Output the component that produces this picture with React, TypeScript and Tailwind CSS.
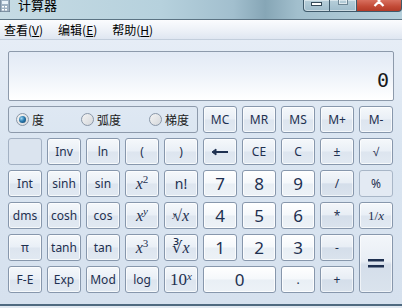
import React from 'react';

// Windows 7 style calculator, scientific mode

type Kind = 'fn' | 'num' | 'op' | 'flat' | 'empty';

const kindClass: Record<Kind, string> = {
    fn: 'border-[#8797ac] bg-[linear-gradient(180deg,#f5f8fb_0%,#e9eff6_48%,#dde5ef_52%,#e1e9f2_100%)] shadow-[inset_0_0_0_1px_rgba(255,255,255,0.7)]',
    num: 'border-[#8797ac] bg-[linear-gradient(180deg,#ffffff_0%,#f5f8fb_48%,#e9eff5_52%,#edf2f7_100%)] shadow-[inset_0_0_0_1px_rgba(255,255,255,0.8)]',
    op: 'border-[#8797ac] bg-[linear-gradient(180deg,#f3f6fa_0%,#e8eef5_46%,#d4deea_52%,#dae3ed_100%)] shadow-[inset_0_0_0_1px_rgba(255,255,255,0.6)]',
    flat: 'border-[#a8b6c7] bg-[#e3eaf3]',
    empty: 'border-[#a3b1c3] bg-[#dbe4ef]',
};

const Btn = ({
    kind = 'fn',
    className = '',
    children,
}: {
    kind?: Kind;
    className?: string;
    children?: React.ReactNode;
}) => (
    <div
        className={`flex items-center justify-center rounded-[3px] border text-[#1e3050] text-[12px] leading-none font-['Noto_Sans',sans-serif] ${kindClass[kind]} ${className}`}
    >
        {children}
    </div>
);

const I = ({ children }: { children: React.ReactNode }) => (
    <span className="italic">{children}</span>
);

const Math = ({ children }: { children: React.ReactNode }) => (
    <span className="font-['Liberation_Serif',serif] text-[16px] text-[#1e3050]">{children}</span>
);

const Radio = ({ checked, label, className = '' }: { checked?: boolean; label: string; className?: string }) => (
    <div className={`flex items-center gap-[3px] ${className}`}>
        <div className="flex h-[13px] w-[13px] items-center justify-center rounded-full border border-[#8a97a8] bg-[linear-gradient(135deg,#f4f4f4,#d4d7db)]">
            {checked && (
                <div className="h-[7px] w-[7px] rounded-full bg-[radial-gradient(circle_at_35%_35%,#9fd6f2_0%,#2a7bb0_45%,#0d3a5e_100%)]" />
            )}
        </div>
        <span className="text-[12px] text-[#1b1b1b] font-['Noto_Sans_CJK_SC',sans-serif]">{label}</span>
    </div>
);

const MenuItem = ({ label, hot }: { label: string; hot: string }) => (
    <span className="text-[12px] text-black font-['Noto_Sans_CJK_SC',sans-serif]">
        {label}(<span className="underline">{hot}</span>)
    </span>
);

export default function App() {
    return (
        <div className="flex h-[308px] w-[402px] flex-col overflow-hidden bg-[#d9e4f1]">
            {/* Title bar (cut off at the top) */}
            <div className="flex h-[20px] shrink-0 items-start justify-between border-b border-[#5b7383] bg-[linear-gradient(90deg,#c6dbe4_0%,#b6d1dd_40%,#a2bfce_58%,#86a6b6_66%,#a2bfcd_74%,#b6d0dc_100%)]">
                <div className="flex items-start gap-[8px]">
                    <svg width="10" height="13" viewBox="0 0 10 13" className="mt-[-1px]">
                        <rect x="0" y="0" width="10" height="13" rx="1" fill="#9fb1c2" stroke="#5d7185" strokeWidth="1" />
                        <rect x="2" y="2" width="6" height="3" fill="#e8f1f8" />
                        <rect x="2" y="7" width="2" height="1.5" fill="#ffffff" />
                        <rect x="5" y="7" width="2" height="1.5" fill="#ffffff" />
                        <rect x="2" y="10" width="2" height="1.5" fill="#ffffff" />
                        <rect x="5" y="10" width="2" height="1.5" fill="#ffffff" />
                    </svg>
                    <span className="mt-[-2px] text-[13px] leading-none text-black font-['Noto_Sans_CJK_SC',sans-serif]">
                        计算器
                    </span>
                </div>
                <div className="flex h-[12px]">
                    <div className="flex w-[54px] rounded-bl-[4px] border border-t-0 border-[#3f5a6b] bg-[linear-gradient(180deg,#b7cfda_0%,#9fbccb_100%)] shadow-[inset_0_0_0_1px_rgba(255,255,255,0.45)]">
                        <div className="flex w-[27px] items-start justify-center border-r border-[#3f5a6b]">
                            <div className="mt-[2px] h-[4px] w-[11px] border border-[#354a58] bg-white" />
                        </div>
                        <div className="flex w-[27px] items-start justify-center">
                            <div className="mt-[-2px] h-[7px] w-[10px] border border-[#6f8795] bg-transparent shadow-[inset_0_0_0_1px_rgba(255,255,255,0.6)]" />
                        </div>
                    </div>
                    <div className="flex w-[45px] items-start justify-center rounded-br-[4px] border border-t-0 border-l-0 border-[#3f5a6b] bg-[linear-gradient(180deg,#d86f5e_0%,#c24a36_60%,#b33b28_100%)]">
                        <svg width="12" height="7" viewBox="0 0 12 7">
                            <path d="M2 -4 L6 0.5 L10 -4 M1.5 6 L6 1.5 L10.5 6" stroke="#ffffff" strokeWidth="2.2" fill="none" />
                        </svg>
                    </div>
                </div>
            </div>

            {/* Menu bar */}
            <div className="flex h-[20px] shrink-0 items-center gap-[15px] border-b border-[#c3cedc] bg-[linear-gradient(180deg,#fbfcfe_0%,#eef2f8_50%,#dfe6f1_100%)] px-[4px]">
                <MenuItem label="查看" hot="V" />
                <MenuItem label="编辑" hot="E" />
                <MenuItem label="帮助" hot="H" />
            </div>

            {/* Body */}
            <div className="flex flex-1 flex-col bg-[linear-gradient(180deg,#e6edf6_0%,#dae5f1_40%,#d6e1ee_100%)] px-[8px] pt-[11px]">
                <div className="flex h-[50px] items-end justify-end rounded-[2px] border border-[#8d9aab] bg-[linear-gradient(180deg,#e2eaf5_0%,#edf2f9_45%,#ffffff_100%)] pb-[10px] pr-[4px]">
                    <span className="text-[20px] leading-none text-[#1a1a1a] font-['DejaVu_Sans_Mono',monospace]">0</span>
                </div>

                <div className="mt-[5px] grid grid-cols-[repeat(10,34px)] grid-rows-[repeat(6,27px)] gap-[5px]">
                    {/* Row 0 */}
                    <div className="col-span-5 flex items-center rounded-[3px] border border-[#8d9aab] pl-[7px]">
                        <Radio checked label="度" />
                        <Radio label="弧度" className="ml-[37px]" />
                        <Radio label="梯度" className="ml-[28px]" />
                    </div>
                    <Btn>MC</Btn>
                    <Btn>MR</Btn>
                    <Btn>MS</Btn>
                    <Btn>M+</Btn>
                    <Btn>M-</Btn>

                    {/* Row 1 */}
                    <Btn kind="empty" />
                    <Btn>Inv</Btn>
                    <Btn>ln</Btn>
                    <Btn>(</Btn>
                    <Btn>)</Btn>
                    <Btn>
                        <svg width="18" height="8" viewBox="0 0 18 8">
                            <path d="M5 1 L1 4 L5 7 Z" fill="#1e3050" stroke="#1e3050" strokeWidth="1" />
                            <rect x="4" y="3" width="13" height="2" fill="#1e3050" />
                        </svg>
                    </Btn>
                    <Btn>CE</Btn>
                    <Btn>C</Btn>
                    <Btn className="text-[11px]">±</Btn>
                    <Btn className="text-[11px]">√</Btn>

                    {/* Row 2 */}
                    <Btn>Int</Btn>
                    <Btn>sinh</Btn>
                    <Btn>sin</Btn>
                    <Btn>
                        <Math>
                            <I>x</I>
                            <sup className="text-[11px]">2</sup>
                        </Math>
                    </Btn>
                    <Btn className="text-[14px]">n!</Btn>
                    <Btn kind="num" className="text-[17px]">7</Btn>
                    <Btn kind="num" className="text-[17px]">8</Btn>
                    <Btn kind="num" className="text-[17px]">9</Btn>
                    <Btn kind="op">/</Btn>
                    <Btn kind="flat">%</Btn>

                    {/* Row 3 */}
                    <Btn>dms</Btn>
                    <Btn>cosh</Btn>
                    <Btn>cos</Btn>
                    <Btn>
                        <Math>
                            <I>x</I>
                            <sup className="text-[11px] italic">y</sup>
                        </Math>
                    </Btn>
                    <Btn>
                        <Math>
                            <sup className="mr-[-3px] text-[8px] italic">y</sup>√<I>x</I>
                        </Math>
                    </Btn>
                    <Btn kind="num" className="text-[17px]">4</Btn>
                    <Btn kind="num" className="text-[17px]">5</Btn>
                    <Btn kind="num" className="text-[17px]">6</Btn>
                    <Btn kind="op">*</Btn>
                    <Btn>
                        <span className="font-['Liberation_Serif',serif] text-[13px]">
                            1/<I>x</I>
                        </span>
                    </Btn>

                    {/* Row 4 */}
                    <Btn>π</Btn>
                    <Btn>tanh</Btn>
                    <Btn>tan</Btn>
                    <Btn>
                        <Math>
                            <I>x</I>
                            <sup className="text-[11px]">3</sup>
                        </Math>
                    </Btn>
                    <Btn>
                        <Math>
                            ∛<I>x</I>
                        </Math>
                    </Btn>
                    <Btn kind="num" className="text-[17px]">1</Btn>
                    <Btn kind="num" className="text-[17px]">2</Btn>
                    <Btn kind="num" className="text-[17px]">3</Btn>
                    <Btn kind="op">-</Btn>
                    <Btn kind="op" className="row-span-2">
                        <svg width="16" height="9" viewBox="0 0 16 9">
                            <rect x="0" y="0" width="16" height="2.5" fill="#1e3050" />
                            <rect x="0" y="6" width="16" height="2.5" fill="#1e3050" />
                        </svg>
                    </Btn>

                    {/* Row 5 */}
                    <Btn>F-E</Btn>
                    <Btn>Exp</Btn>
                    <Btn>Mod</Btn>
                    <Btn>log</Btn>
                    <Btn>
                        <span className="font-['Liberation_Serif',serif] text-[17px]">
                            10<sup className="text-[11px] italic">x</sup>
                        </span>
                    </Btn>
                    <Btn kind="num" className="col-span-2 text-[17px]">0</Btn>
                    <Btn kind="num">.</Btn>
                    <Btn kind="op">+</Btn>
                </div>
            </div>

            {/* Bottom frame */}
            <div className="h-[4px] shrink-0 border-t-2 border-[#4f6a80] bg-[#e1e9f1]" />
        </div>
    );
}
